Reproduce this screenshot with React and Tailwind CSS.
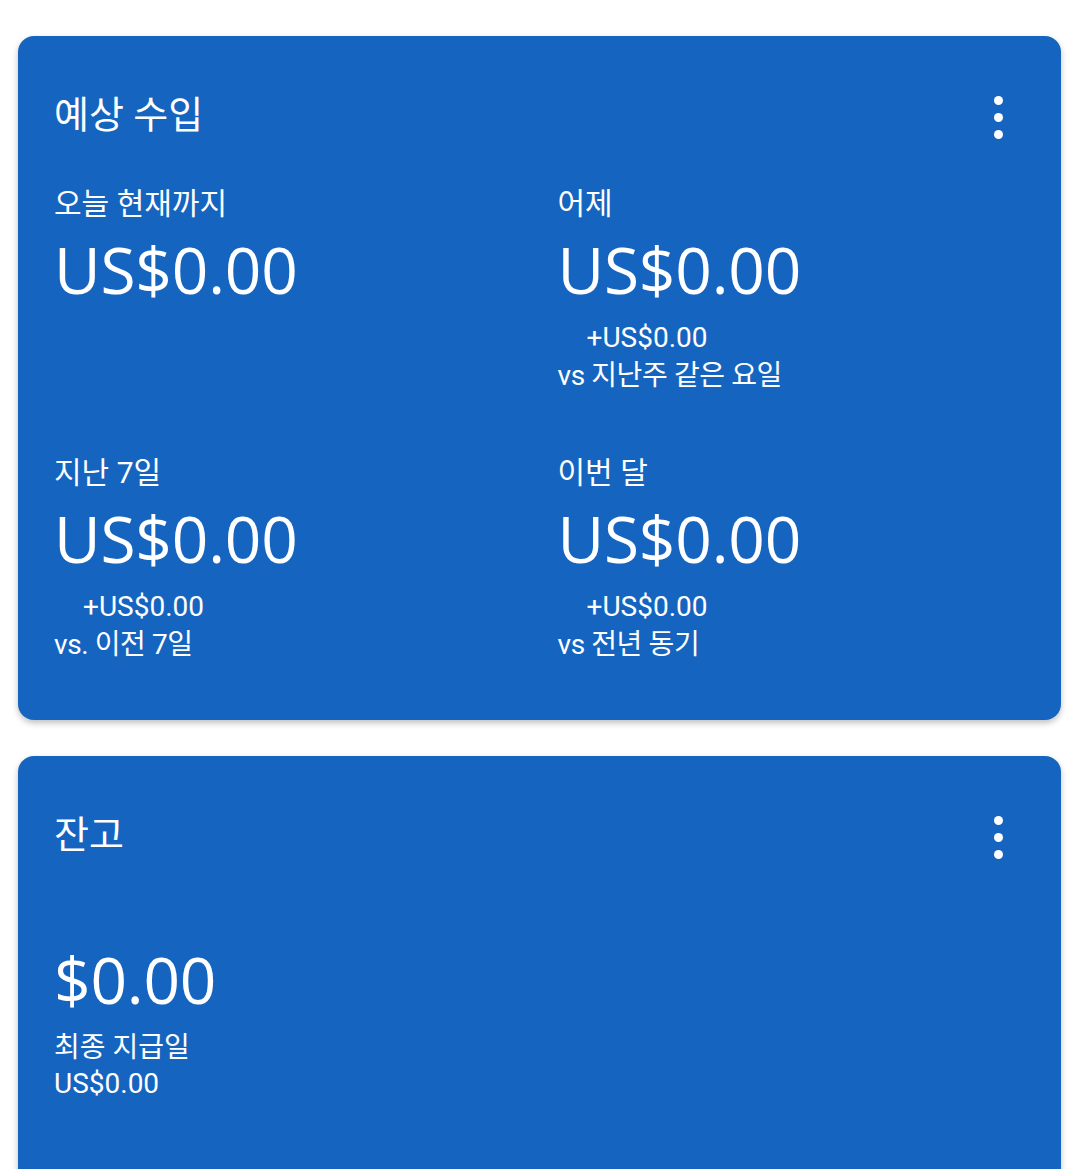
import React from 'react';

const bodyFont = { fontFamily: "Roboto, 'Noto Sans CJK KR', sans-serif" };
const bigFont = { fontFamily: "'Open Sans', 'Noto Sans CJK KR', sans-serif" };

function MoreButton() {
  return (
    <div className="mr-[15px] mt-[4px] flex flex-col items-center gap-[8px] w-6">
      <span className="w-[9px] h-[9px] rounded-full bg-white" />
      <span className="w-[9px] h-[9px] rounded-full bg-white" />
      <span className="w-[9px] h-[9px] rounded-full bg-white" />
    </div>
  );
}

function Stat({ label, amount, delta, compare }) {
  return (
    <div className="flex flex-col">
      <p className="text-[30px] leading-[36px]">{label}</p>
      <p className="mt-[10px] text-[64px] leading-[76px] font-normal tracking-[-0.2px]" style={bigFont}>{amount}</p>
      {delta && (
        <div className="mt-[11px] text-[28px] leading-[38px]">
          <p className="pl-[29px]">{delta}</p>
          <p className="tracking-[-0.4px]">{compare}</p>
        </div>
      )}
    </div>
  );
}

export default function App() {
  return (
    <div className="min-h-screen bg-white px-[18px] pt-[36px] text-white" style={bodyFont}>
      {/* 예상 수입 */}
      <div className="rounded-[16px] bg-[#1565c0] shadow-[0_3px_6px_rgba(0,0,0,0.25)] px-[36px] pt-[55px] pb-[56px]">
        <div className="flex items-center justify-between">
          <h2 className="text-[38px] leading-[48px]">예상 수입</h2>
          <MoreButton />
        </div>
        <div className="mt-[47px] grid grid-cols-2 gap-x-9 gap-y-[60px]">
          <Stat label="오늘 현재까지" amount="US$0.00" />
          <Stat label="어제" amount="US$0.00" delta="+US$0.00" compare="vs 지난주 같은 요일" />
          <Stat label="지난 7일" amount="US$0.00" delta="+US$0.00" compare="vs. 이전 7일" />
          <Stat label="이번 달" amount="US$0.00" delta="+US$0.00" compare="vs 전년 동기" />
        </div>
      </div>

      {/* 잔고 */}
      <div className="mt-[36px] rounded-t-[16px] bg-[#1565c0] shadow-[0_3px_6px_rgba(0,0,0,0.25)] px-[36px] pt-[55px] h-[460px]">
        <div className="flex items-center justify-between">
          <h2 className="text-[38px] leading-[48px]">잔고</h2>
          <MoreButton />
        </div>
        <p className="mt-[83px] text-[64px] leading-[76px] tracking-[-0.2px]" style={bigFont}>$0.00</p>
        <div className="mt-[12px] text-[28px] leading-[36px]">
          <p>최종 지급일</p>
          <p>US$0.00</p>
        </div>
      </div>
    </div>
  );
}
